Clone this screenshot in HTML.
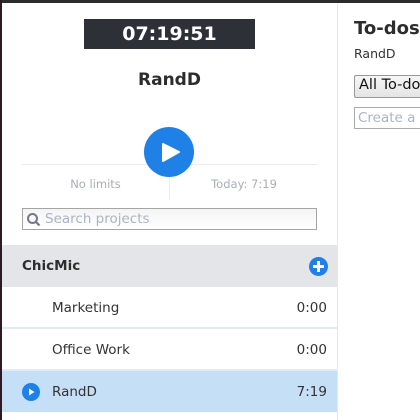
<!DOCTYPE html>
<html><head><style>
*{margin:0;padding:0;box-sizing:border-box}
html,body{width:420px;height:420px;overflow:hidden}
body{background:#fff;font-family:"DejaVu Sans","Liberation Sans",sans-serif;position:relative;color:#333}
div{position:absolute}
.t{white-space:nowrap}
</style></head><body>
<div style="left:0;top:0;width:420px;height:3px;background:#2b2b2b"></div>
<div style="left:0;top:0;width:2px;height:420px;background:#2c1a24"></div>
<div style="left:337px;top:3px;width:1px;height:417px;background:#e8e8e8"></div>
<div style="left:84px;top:19px;width:171px;height:30px;background:#2e3038;color:#fff;font-weight:bold;font-size:19px;text-align:center;line-height:31px">07:19:51</div>
<div class="t" style="left:2px;width:335px;top:70px;text-align:center;font-weight:bold;font-size:17px;color:#2d2d2d">RandD</div>
<div style="left:22px;top:164px;width:296px;height:1px;background:#ececec"></div>
<div style="left:169px;top:165px;width:1px;height:34px;background:#ececec"></div>
<div style="left:144px;top:127px;width:50px;height:50px;border-radius:50%;background:#1f80e6"></div>
<svg style="position:absolute;left:144px;top:127px" width="50" height="50"><path d="M163 144 L179 152 L163 161Z" transform="translate(-144,-127)" fill="#fff" stroke="#fff" stroke-width="2" stroke-linejoin="round"/></svg>
<div class="t" style="left:22px;width:147px;top:177px;text-align:center;font-size:11.5px;color:#a9adb5">No limits</div>
<div class="t" style="left:170px;width:148px;top:177px;text-align:center;font-size:11.5px;color:#a9adb5">Today: 7:19</div>
<div style="left:22px;top:208px;width:295px;height:22px;border:1px solid #a5a5a5;background:linear-gradient(#f4f4f4,#fff)"></div>
<svg style="position:absolute;left:26px;top:212px" width="16" height="16"><circle cx="6.5" cy="6.5" r="4.5" fill="none" stroke="#778" stroke-width="2"/><path d="M10 10 L13.5 13.5" stroke="#778" stroke-width="2.2"/></svg>
<div class="t" style="left:45px;top:211px;font-size:13.5px;color:#aab4c4">Search projects</div>
<div style="left:2px;top:245px;width:335px;height:42px;background:#e4e5e8"></div>
<div class="t" style="left:22px;top:258px;font-size:13.5px;font-weight:bold;color:#2d2d2d">ChicMic</div>
<div style="left:309px;top:257px;width:19px;height:19px;border-radius:50%;background:#1f80e6"></div>
<div style="left:313px;top:265px;width:11px;height:3px;background:#fff"></div>
<div style="left:317px;top:261px;width:3px;height:11px;background:#fff"></div>
<div style="left:2px;top:327px;width:335px;height:2px;background:#e2eaf3"></div>
<div style="left:2px;top:369px;width:335px;height:2px;background:#e2eaf3"></div>
<div style="left:2px;top:371px;width:335px;height:41px;background:#c5dff6"></div>
<div class="t" style="left:52px;top:300px;font-size:13.5px;color:#333">Marketing</div>
<div class="t" style="left:280px;width:47px;text-align:right;top:300px;font-size:13.5px;color:#333">0:00</div>
<div class="t" style="left:52px;top:342px;font-size:13.5px;color:#333">Office Work</div>
<div class="t" style="left:280px;width:47px;text-align:right;top:342px;font-size:13.5px;color:#333">0:00</div>
<div class="t" style="left:52px;top:384px;font-size:13.5px;color:#333">RandD</div>
<div class="t" style="left:280px;width:47px;text-align:right;top:384px;font-size:13.5px;color:#333">7:19</div>
<div style="left:22px;top:383px;width:18px;height:18px;border-radius:50%;background:#1f80e6"></div>
<svg style="position:absolute;left:22px;top:383px" width="18" height="18"><path d="M7 5.5 L12.5 9 L7 12.5Z" fill="#fff"/></svg>
<div style="left:338px;top:3px;width:82px;height:417px;overflow:hidden">
<div class="t" style="left:16px;top:15px;font-size:18px;font-weight:bold;color:#2d2d2d">To-dos</div>
<div class="t" style="left:16px;top:43px;font-size:12.5px;color:#333">RandD</div>
<div style="left:16px;top:72px;width:80px;height:23px;border:1px solid #999;background:linear-gradient(#f6f6f6,#e4e4e4);border-radius:2px"></div>
<div class="t" style="left:21px;top:74px;font-size:14.5px;color:#111">All To-dos</div>
<div style="left:16px;top:104px;width:80px;height:22px;border:1px solid #aaa"></div>
<div class="t" style="left:20px;top:107px;font-size:13.5px;color:#aab4c4">Create a to-do</div>
</div>
</body></html>
